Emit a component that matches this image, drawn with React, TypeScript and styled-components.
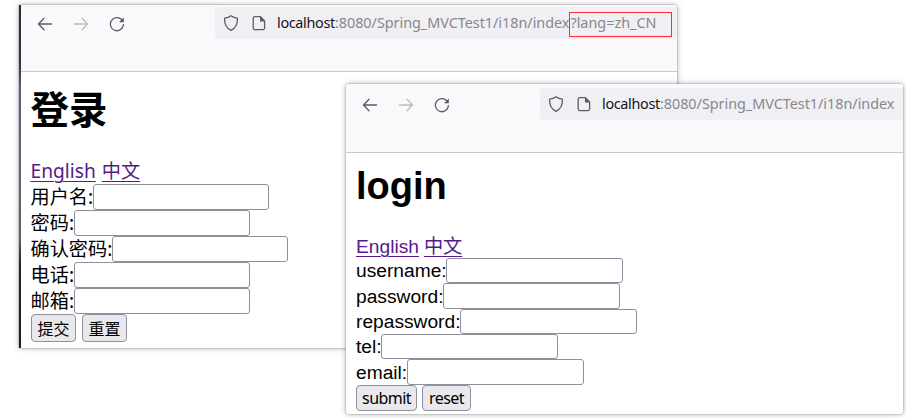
import React from "react";
import styled, { createGlobalStyle } from "styled-components";

const GlobalStyle = createGlobalStyle`
  * { box-sizing: border-box; }
  body { margin: 0; background: #fff; }
`;

const Desktop = styled.main`
  position: relative;
  width: 906px;
  height: 418px;
  overflow: hidden;
  background: #fff;
`;

const Browser = styled.section<{ $x: number; $y: number; $w: number; $h: number; $edge?: boolean }>`
  position: absolute;
  left: ${(p) => p.$x}px;
  top: ${(p) => p.$y}px;
  width: ${(p) => p.$w}px;
  height: ${(p) => p.$h}px;
  display: flex;
  background: #fff;
  border-radius: ${(p) => (p.$edge ? "0 3px 0 0" : "3px")};
  box-shadow: 0 0 2px rgba(0, 0, 0, 0.42), 0 0 6px rgba(0, 0, 0, 0.28);
`;

const Edge = styled.div`
  flex: none;
  width: 2px;
  background: linear-gradient(#252c35 0, #2c3643 17%, #526078 24%, #5b6878 48%, #57616c 68%, #202327 76%, #1d1c20 100%);
`;

const Pane = styled.div`
  flex: 1;
  min-width: 0;
  display: flex;
  flex-direction: column;
  border-radius: inherit;
  overflow: hidden;
`;

const Toolbar = styled.header<{ $h: number; $top: number }>`
  flex: none;
  display: flex;
  align-items: flex-start;
  height: ${(p) => p.$h}px;
  padding-top: ${(p) => p.$top}px;
  background: #f9f9fb;
  border-bottom: 1px solid #c8c8c9;
`;

const Navigation = styled.nav<{ $left: number; $w: number }>`
  flex: none;
  display: flex;
  align-items: center;
  gap: 20px;
  width: ${(p) => p.$w}px;
  height: 33px;
  padding-left: ${(p) => p.$left}px;
`;

const Icon = styled.svg<{ $faded?: boolean }>`
  flex: none;
  width: 16px;
  height: 16px;
  fill: none;
  stroke: ${(p) => (p.$faded ? "#bcbcc0" : "#5b5b66")};
  stroke-width: 1.3;
  stroke-linecap: round;
  stroke-linejoin: round;
`;

const AddressBar = styled.div`
  flex: 1;
  min-width: 0;
  display: flex;
  align-items: center;
  height: 32px;
  padding-left: 8px;
  gap: 12px;
  border-radius: 4px 0 0 4px;
  background: #f0f0f4;
`;

const Url = styled.div`
  display: flex;
  margin-left: -2px;
  font: 14.4px/24px "Noto Sans", sans-serif;
  white-space: nowrap;
  color: #87878c;
`;

const Host = styled.span`
  color: #15141a;
  letter-spacing: -0.32px;
`;

const Path = styled.span`
  letter-spacing: -0.03px;
`;

const Query = styled.span`
  width: 103px;
  height: 25px;
  margin: 1px 0 -1px 0;
  border: 1px solid #ff2d2d;
  line-height: 20px;
  letter-spacing: 0;
`;

const Content = styled.div<{ $zh?: boolean }>`
  padding: ${(p) => (p.$zh ? "13px 9.5px 0" : "10px 10px 0")};
  font-family: ${(p) => (p.$zh ? '"Noto Sans", "Noto Sans CJK SC", sans-serif' : '"Liberation Sans", "Noto Sans CJK SC", sans-serif')};
  font-size: 19.2px;
  color: #000;
`;

const Title = styled.h1<{ $zh?: boolean }>`
  margin: 0;
  height: ${(p) => (p.$zh ? 73 : 71)}px;
  font-size: ${(p) => (p.$zh ? 38.4 : 38)}px;
  line-height: ${(p) => (p.$zh ? 48 : 47)}px;
  font-weight: 700;
`;

const Links = styled.div<{ $zh?: boolean }>`
  display: flex;
  gap: ${(p) => (p.$zh ? 6 : 5)}px;
  height: ${(p) => (p.$zh ? 26 : 24)}px;
  line-height: 25px;
`;

const Link = styled.a`
  color: #551a8b;
  text-decoration: underline;
  text-decoration-thickness: 1px;
  text-underline-offset: 3px;
`;

const Field = styled.label<{ $zh?: boolean }>`
  display: flex;
  align-items: center;
  height: ${(p) => (p.$zh ? 26.1 : 25.35)}px;
  white-space: nowrap;
`;

const Label = styled.span<{ $zh?: boolean }>`
  line-height: 24px;
  padding-top: ${(p) => (p.$zh ? 0 : 1.2)}px;
  margin-right: ${(p) => (p.$zh ? -0.5 : -0.7)}px;
`;

const Input = styled.input<{ $zh?: boolean }>`
  width: ${(p) => (p.$zh ? 176 : 177)}px;
  height: ${(p) => (p.$zh ? 26 : 25.4)}px;
  margin: 0;
  padding: 1px 2px;
  border: 1px solid #8f8f9d;
  border-radius: 3px;
  background: #fff;
`;

const Actions = styled.div<{ $zh?: boolean }>`
  display: flex;
  gap: ${(p) => (p.$zh ? 6 : 5)}px;
  padding-left: ${(p) => (p.$zh ? 0.5 : 0)}px;
`;

const Button = styled.button<{ $w: number; $zh?: boolean }>`
  width: ${(p) => p.$w}px;
  height: ${(p) => (p.$zh ? 28 : 26)}px;
  padding: 1px 0 0;
  border: 1px solid #8f8f9d;
  border-radius: 4px;
  background: #e9e9ed;
  color: #000;
  font: 16px/22px "Noto Sans", "Noto Sans CJK SC", sans-serif;
  letter-spacing: ${(p) => (p.$zh ? 0 : -0.55)}px;
`;

const BackIcon = () => (
  <Icon viewBox="0 0 16 16"><path d="M14.5 8H1.8M7 2.3 1.5 8 7 13.7" /></Icon>
);
const ForwardIcon = () => (
  <Icon viewBox="0 0 16 16" $faded><path d="M1.5 8h12.7M9 2.3 14.5 8 9 13.7" /></Icon>
);
const ReloadIcon = () => (
  <Icon viewBox="0 0 16 16">
    <path d="M12.7 3.8A6.5 6.5 0 1 0 14.4 8.6" />
    <path d="M14.8 1.5v4.8H10z" fill="#5b5b66" stroke="none" />
  </Icon>
);
const ShieldIcon = () => (
  <Icon viewBox="0 0 16 16">
    <path d="M8 .8C6.2 2.2 4 3 1.6 3.2 1.3 9 3.2 13.3 8 15.4c4.8-2.1 6.7-6.4 6.4-12.2C12 3 9.8 2.2 8 .8z" />
  </Icon>
);
const PageIcon = () => (
  <Icon viewBox="0 0 16 16">
    <path d="M9.5 1.7H3.7a1.5 1.5 0 0 0-1.5 1.5v9.9a1.5 1.5 0 0 0 1.5 1.5h8.4a1.5 1.5 0 0 0 1.5-1.5V6z" />
    <path d="M9 1.5v5h5z" fill="#5b5b66" stroke="none" />
  </Icon>
);

type WindowProps = {
  zh?: boolean;
  query?: string;
  title: string;
  fields: string[];
  submit: string;
  reset: string;
  frame: { x: number; y: number; w: number; h: number };
};

function LoginWindow({ zh, query, title, fields, submit, reset, frame }: WindowProps) {
  return (
    <Browser $x={frame.x} $y={frame.y} $w={frame.w} $h={frame.h} $edge={zh}>
      {zh && <Edge />}
      <Pane>
        <Toolbar $h={zh ? 67 : 69} $top={zh ? 2 : 4}>
          <Navigation $left={16} $w={194}>
            <BackIcon />
            <ForwardIcon />
            <ReloadIcon />
          </Navigation>
          <AddressBar>
            <ShieldIcon />
            <PageIcon />
            <Url>
              <Host>localhost</Host>
              <Path>:8080/Spring_MVCTest1/i18n/index</Path>
              {query && <Query>{query}</Query>}
            </Url>
          </AddressBar>
        </Toolbar>
        <Content $zh={zh}>
          <Title $zh={zh}>{title}</Title>
          <Links $zh={zh}>
            <Link>English</Link>
            <Link>中文</Link>
          </Links>
          {fields.map((field) => (
            <Field key={field} $zh={zh}>
              <Label $zh={zh}>{field}:</Label>
              <Input $zh={zh} />
            </Field>
          ))}
          <Actions $zh={zh}>
            <Button $w={zh ? 45 : 61} $zh={zh}>{submit}</Button>
            <Button $w={zh ? 45 : 49} $zh={zh}>{reset}</Button>
          </Actions>
        </Content>
      </Pane>
    </Browser>
  );
}

export default function App() {
  return (
    <Desktop>
      <GlobalStyle />
      <LoginWindow
        zh
        query="?lang=zh_CN"
        title="登录"
        fields={["用户名", "密码", "确认密码", "电话", "邮箱"]}
        submit="提交"
        reset="重置"
        frame={{ x: 19, y: 5, w: 658, h: 343 }}
      />
      <LoginWindow
        title="login"
        fields={["username", "password", "repassword", "tel", "email"]}
        submit="submit"
        reset="reset"
        frame={{ x: 346, y: 84, w: 557, h: 330 }}
      />
    </Desktop>
  );
}
